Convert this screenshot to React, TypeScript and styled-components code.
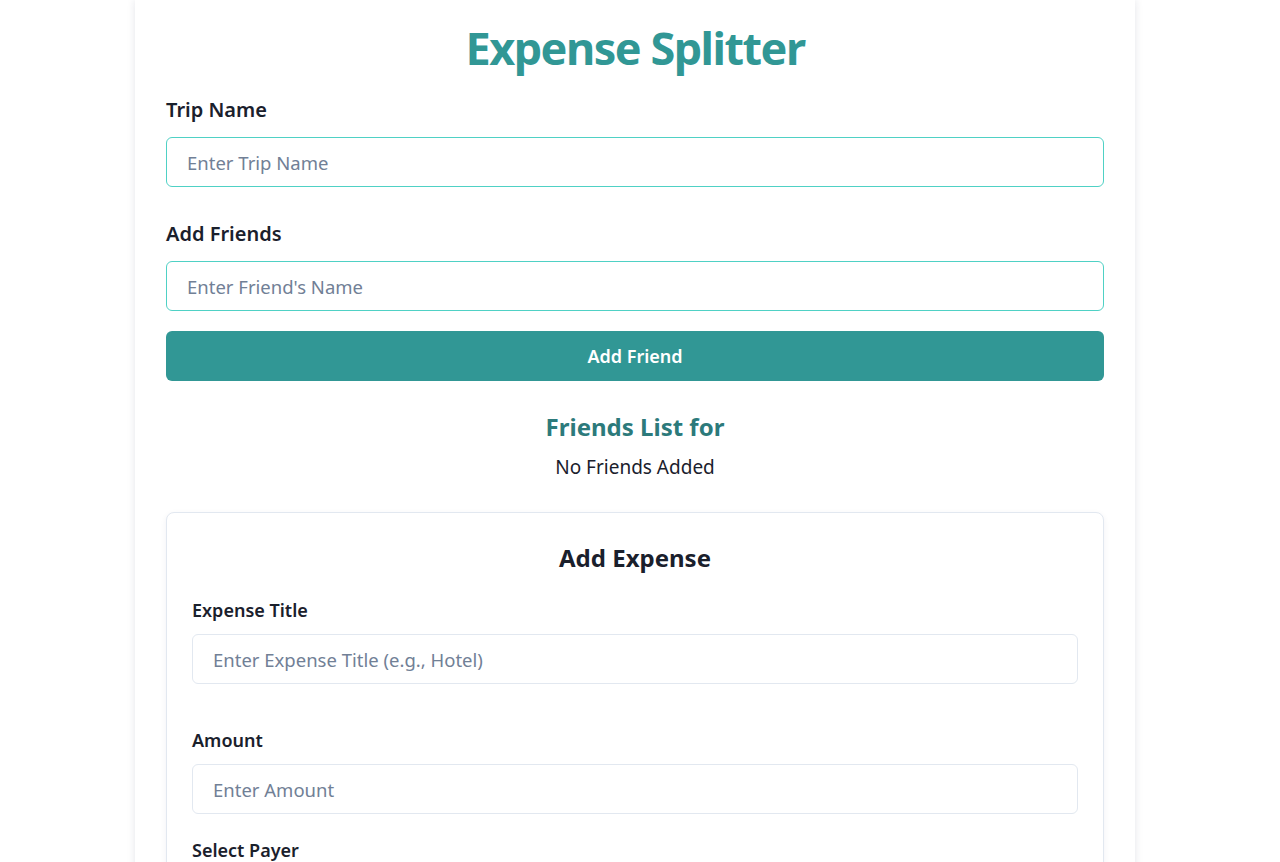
import * as React from 'react';
import styled, { createGlobalStyle } from 'styled-components';

const GlobalStyle = createGlobalStyle`
    html, body {
        margin: 0;
        padding: 0;
        background: #ffffff;
    }
    body {
        font-family: "Noto Sans", "Open Sans", Arial, sans-serif;
        color: #1a202c;
    }
    * {
        box-sizing: border-box;
    }
`;

export default function App() {
    const [tripName, setTripName] = React.useState('');
    const [friend, setFriend] = React.useState('');
    const [friends, setFriends] = React.useState<string[]>([]);

    const addFriend = () => {
        if (!friend.trim()) return;
        setFriends([...friends, friend.trim()]);
        setFriend('');
    };

    return (
        <Page>
            <GlobalStyle />
            <Container>
                <Title>Expense Splitter</Title>

                <Label>Trip Name</Label>
                <TealInput
                    placeholder="Enter Trip Name"
                    value={tripName}
                    onChange={e => setTripName(e.target.value)}
                />

                <Label spaced>Add Friends</Label>
                <TealInput
                    placeholder="Enter Friend's Name"
                    value={friend}
                    onChange={e => setFriend(e.target.value)}
                />
                <PrimaryButton onClick={addFriend}>Add Friend</PrimaryButton>

                <FriendsHeading>Friends List for {tripName}</FriendsHeading>
                {friends.length === 0 ? (
                    <Muted>No Friends Added</Muted>
                ) : (
                    <FriendList>
                        {friends.map((f, i) => <li key={i}>{f}</li>)}
                    </FriendList>
                )}

                <ExpenseCard>
                    <CardTitle>Add Expense</CardTitle>

                    <Field gap={44}>
                        <FieldLabel>Expense Title</FieldLabel>
                        <PlainInput placeholder="Enter Expense Title (e.g., Hotel)" />
                    </Field>

                    <Field gap={24}>
                        <FieldLabel>Amount</FieldLabel>
                        <PlainInput placeholder="Enter Amount" />
                    </Field>

                    <Field gap={24}>
                        <FieldLabel>Select Payer</FieldLabel>
                        <Select defaultValue="">
                            <option value="">Select Payer</option>
                            {friends.map((f, i) => <option key={i}>{f}</option>)}
                        </Select>
                    </Field>

                    <PrimaryButton>Add Expense</PrimaryButton>
                </ExpenseCard>
            </Container>
        </Page>
    );
}

const Page = styled.div`
    padding-right: 10px;
`;

const Container = styled.div`
    width: 1000px;
    margin: 0 auto;
    padding: 20px 31px 40px;
    background: #fff;
    box-shadow: 0 0 8px rgba(30, 41, 80, 0.12);
`;

const Title = styled.h1`
    margin: 0 0 20px;
    text-align: center;
    font-size: 45px;
    line-height: 56px;
    font-weight: 700;
    letter-spacing: -1.5px;
    color: #319795;
`;

const Label = styled.label<{ spaced?: boolean }>`
    display: block;
    margin: ${p => (p.spaced ? '33px' : '0')} 0 13px;
    font-size: 20px;
    line-height: 28px;
    font-weight: 600;
    color: #1a202c;
`;

const TealInput = styled.input`
    display: block;
    width: 100%;
    height: 50px;
    padding: 0 20px;
    border: 1px solid #4fd1c5;
    border-radius: 6px;
    font-family: inherit;
    font-size: 18.5px;
    color: #1a202c;
    outline: none;
    &::placeholder {
        color: #718096;
    }
`;

const PrimaryButton = styled.button`
    display: block;
    width: 100%;
    height: 50px;
    margin-top: 20px;
    border: none;
    border-radius: 6px;
    background: #319795;
    color: #fff;
    font-family: inherit;
    font-size: 18px;
    font-weight: 600;
    cursor: pointer;
`;

const FriendsHeading = styled.h2`
    margin: 30px 0 10px;
    text-align: center;
    font-size: 24px;
    line-height: 32px;
    font-weight: 700;
    color: #2c7a7b;
`;

const Muted = styled.p`
    margin: 0;
    text-align: center;
    font-size: 19px;
    line-height: 28px;
    color: #1a202c;
`;

const FriendList = styled.ul`
    margin: 0;
    padding: 0;
    list-style: none;
    text-align: center;
    font-size: 18px;
    line-height: 28px;
`;

const ExpenseCard = styled.div`
    margin-top: 31px;
    padding: 25px;
    border: 1px solid #e2e8f0;
    border-radius: 8px;
    background: #fff;
    box-shadow: 0 2px 6px rgba(30, 41, 80, 0.06);
`;

const CardTitle = styled.h3`
    margin: 0 0 20px;
    text-align: center;
    font-size: 24px;
    line-height: 40px;
    font-weight: 700;
    color: #1a202c;
`;

const Field = styled.div<{ gap: number }>`
    margin-bottom: ${p => p.gap}px;
`;

const FieldLabel = styled.label`
    display: block;
    margin-bottom: 12px;
    font-size: 18px;
    line-height: 24px;
    font-weight: 600;
    color: #1a202c;
`;

const PlainInput = styled.input`
    display: block;
    width: 100%;
    height: 50px;
    padding: 0 20px;
    border: 1px solid #e2e8f0;
    border-radius: 6px;
    font-family: inherit;
    font-size: 18.5px;
    color: #1a202c;
    outline: none;
    &::placeholder {
        color: #718096;
    }
`;

const Select = styled.select`
    display: block;
    width: 100%;
    height: 50px;
    padding: 0 16px;
    border: 1px solid #e2e8f0;
    border-radius: 6px;
    background: #fff;
    font-family: inherit;
    font-size: 18px;
    color: #1a202c;
`;
